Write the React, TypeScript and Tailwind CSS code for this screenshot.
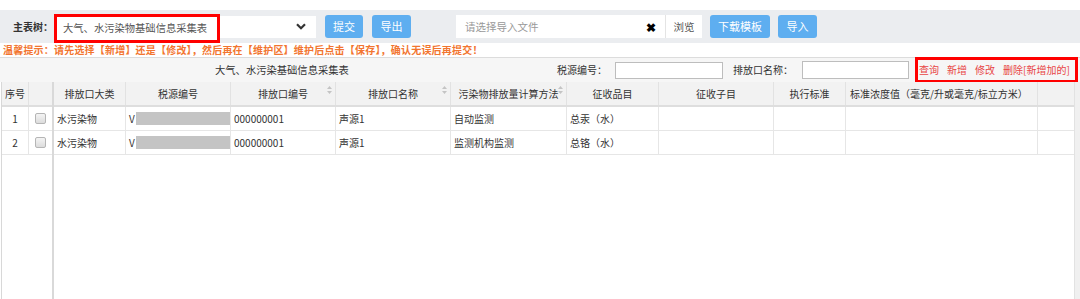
import React from 'react';

const FONT = "font-['Noto_Sans_CJK_SC','Noto_Sans',sans-serif]";

type Col = { title: string; w: string; sort?: boolean; left?: boolean };

const cols: Col[] = [
  { title: '排放口大类', w: 'w-[72px]' },
  { title: '税源编号', w: 'w-[105px]' },
  { title: '排放口编号', w: 'w-[105px]', sort: true },
  { title: '排放口名称', w: 'w-[115px]', sort: true },
  { title: '污染物排放量计算方法', w: 'w-[116px]', sort: true },
  { title: '征收品目', w: 'w-[92px]' },
  { title: '征收子目', w: 'w-[115px]' },
  { title: '执行标准', w: 'w-[72px]' },
  { title: '标准浓度值（毫克/升或毫克/标立方米）', w: 'w-[192px]', left: true },
  { title: '', w: 'w-[36px]' },
];

const rows = [
  { no: '1', type: '水污染物', code: '000000001', name: '声源1', method: '自动监测', item: '总汞（水）' },
  { no: '2', type: '水污染物', code: '000000001', name: '声源1', method: '监测机构监测', item: '总铬（水）' },
];

const SortIcon = () => (
  <svg className="absolute right-[3px] top-[4px]" width="5" height="8" viewBox="0 0 5 8">
    <path d="M2.5 0 L5 3 L0 3 Z" fill="#c4c4c4" />
    <path d="M2.5 8 L5 5 L0 5 Z" fill="#c4c4c4" />
  </svg>
);

const Btn = ({ children, w }: { children: React.ReactNode; w: string }) => (
  <div className={`${w} h-[23px] rounded-[3px] bg-[#5eaef0] text-white text-[11px] flex items-center justify-center`}>
    {children}
  </div>
);

const App: React.FC = () => {
  return (
    <div className={`w-[1080px] h-[299px] overflow-hidden bg-white text-[10px] text-[#333] ${FONT}`}>
      <div className="h-[10px]" />

      {/* toolbar */}
      <div className="h-[33px] bg-[#ebedf0] flex items-center">
        <span className="ml-[13px] w-[41px] font-bold leading-none">主表树：</span>
        <div className="flex items-center">
          <div className="w-[166px] h-[29px] mt-[4px] border-[3px] border-[#ff0000] bg-white flex items-center pl-[6px] text-[#555] text-[10.3px] leading-none">
            大气、水污染物基础信息采集表
          </div>
          <div className="w-[96px] h-[22px] bg-white flex items-center justify-end pr-[10px]">
            <svg width="10" height="7" viewBox="0 0 10 7">
              <path d="M1 1.2 L5 5.2 L9 1.2" stroke="#333" strokeWidth="2.2" fill="none" />
            </svg>
          </div>
        </div>
        <div className="ml-[9px]"><Btn w="w-[38px]">提交</Btn></div>
        <div className="ml-[9px]"><Btn w="w-[39px]">导出</Btn></div>
        <div className="ml-[45px] w-[209px] h-[23px] bg-white flex items-center pl-[9px] pr-[9px]">
          <span className="text-[#999] text-[10.5px] flex-1">请选择导入文件</span>
          <span className="text-black text-[12px] font-bold leading-none">✖</span>
        </div>
        <div className="w-[37px] h-[23px] bg-white border-l border-[#e4e4e4] flex items-center justify-center text-[#555] text-[10.5px]">
          浏览
        </div>
        <div className="ml-[8px]"><Btn w="w-[60px]">下载模板</Btn></div>
        <div className="ml-[8px]"><Btn w="w-[39px]">导入</Btn></div>
      </div>

      {/* hint */}
      <div className="h-[14px] pl-[3px] flex items-center text-[#f2752f] font-bold text-[10px] tracking-[0.2px] leading-none">
        温馨提示：请先选择【新增】还是【修改】，然后再在【维护区】维护后点击【保存】，确认无误后再提交！
      </div>

      {/* title / search row */}
      <div className="h-[25px] border-t border-[#dcdcdc] bg-[#f6f6f6] flex items-center">
        <span className="ml-[215px] text-[10.3px] leading-none">大气、水污染基础信息采集表</span>
        <span className="ml-auto w-[58px] leading-none">税源编号：</span>
        <div className="w-[108px] h-[17px] bg-white border border-[#bdbdbd]" />
        <span className="ml-[10px] w-[69px] leading-none">排放口名称：</span>
        <div className="w-[107px] h-[18px] bg-white border border-[#bdbdbd]" />
        <div className="ml-[6px] mr-[2px] w-[163px] h-[26px] -my-px border-[3px] border-[#ff0000] flex items-center gap-[8px] pl-[1px] text-[#e84545] text-[10px] leading-none">
          <span>查询</span>
          <span>新增</span>
          <span>修改</span>
          <span>删除[新增加的]</span>
        </div>
      </div>

      {/* grid */}
      <div className="flex h-[217px]">
        <div className="w-[1074px] flex pl-[1px]">
          {/* frozen columns */}
          <div className="w-[53px] border-l border-[#d8d8d8] border-r-2 border-r-[#d9d9d9] flex flex-col">
            <div className="h-[25px] bg-[#f2f2f2] border-b-2 border-[#dedede] flex">
              <div className="w-[27px] border-r border-[#e2e2e2] pl-[3px] flex items-center">序号</div>
              <div className="flex-1" />
            </div>
            {rows.map((r) => (
              <div key={r.no} className="h-[24px] border-b border-[#e6e6e6] flex">
                <div className="w-[27px] border-r border-[#e6e6e6] flex items-center justify-center">{r.no}</div>
                <div className="flex-1 flex items-center justify-center">
                  <div className="w-[11px] h-[11px] rounded-[2px] border border-[#b5b5b5] bg-gradient-to-b from-[#f4f4f4] to-[#dcdcdc]" />
                </div>
              </div>
            ))}
          </div>

          {/* scrolling columns */}
          <div className="flex-1 flex flex-col">
            <div className="h-[25px] bg-[#f2f2f2] border-b-2 border-[#dedede] flex">
              {cols.map((c, i) => (
                <div
                  key={i}
                  className={`${c.w} relative shrink-0 ${i < cols.length - 1 ? 'border-r border-[#e2e2e2]' : ''} flex items-center ${c.left ? 'pl-[4px]' : 'justify-center'} whitespace-nowrap`}
                >
                  {c.title}
                  {c.sort && <SortIcon />}
                </div>
              ))}
            </div>
            {rows.map((r) => {
              const cells: React.ReactNode[] = [
                r.type,
                <span className="flex items-center">
                  V<span className="ml-[1px] w-[94px] h-[13px] bg-[#c4c4c4]" />
                </span>,
                r.code,
                r.name,
                r.method,
                r.item,
                '',
                '',
                '',
                '',
              ];
              return (
                <div key={r.no} className="h-[24px] border-b border-[#e6e6e6] flex">
                  {cells.map((v, i) => (
                    <div
                      key={i}
                      className={`${cols[i].w} shrink-0 ${i < cols.length - 1 ? 'border-r border-[#e6e6e6]' : ''} flex items-center pl-[3px] whitespace-nowrap`}
                    >
                      {v}
                    </div>
                  ))}
                </div>
              );
            })}
            <div className="flex-1" />
          </div>
        </div>
        <div className="w-[6px] bg-[#f0f0f0] border-l border-[#e2e2e2]" />
      </div>
    </div>
  );
};

export default App;
